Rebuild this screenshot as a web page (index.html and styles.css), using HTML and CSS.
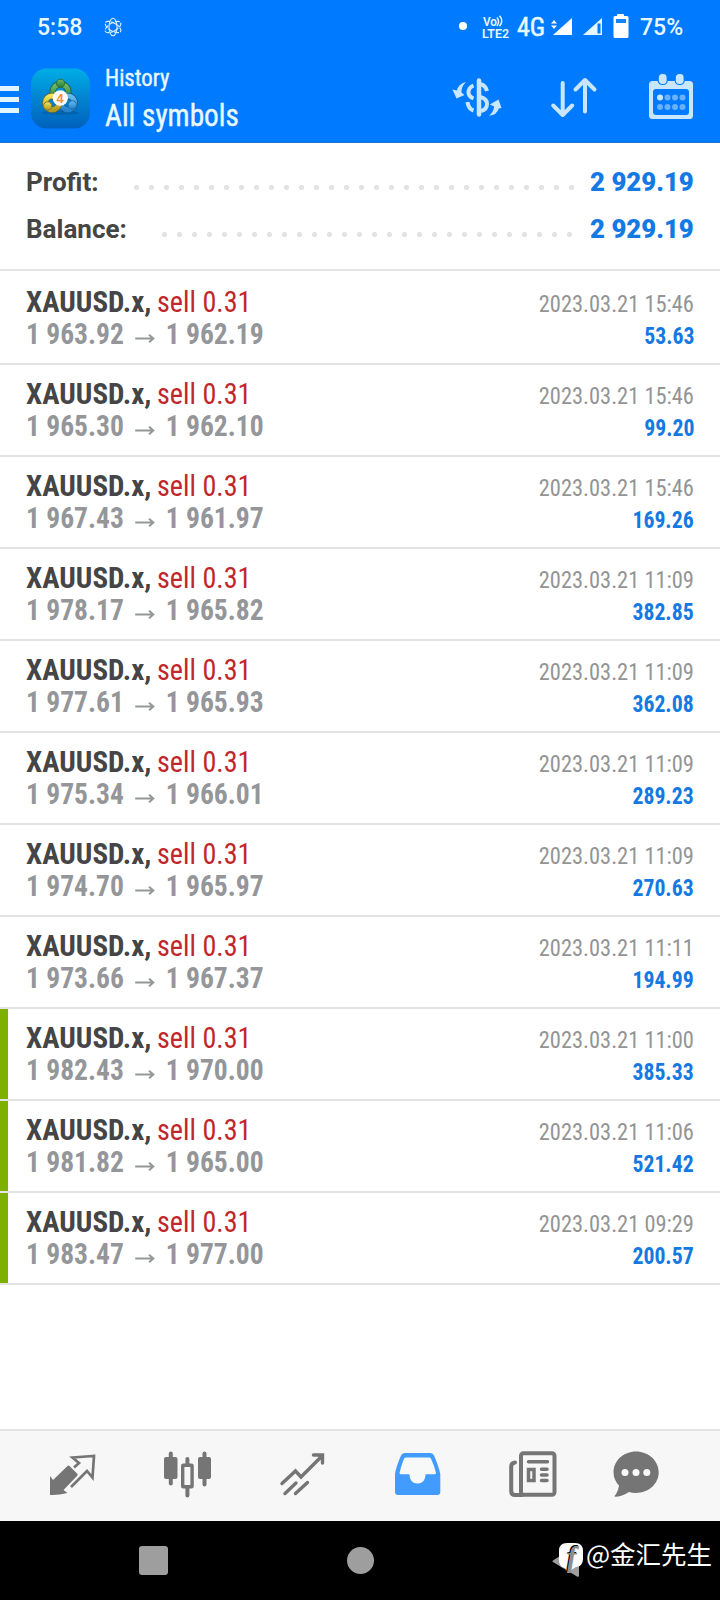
FILE: index.html
```html
<!DOCTYPE html>
<html lang="en">
<head>
<meta charset="utf-8">
<title>History</title>
<link rel="stylesheet" href="styles.css">
</head>
<body>
<div class="screen">
  <header class="header">
    <div class="status">
      <span class="clock">5:58</span>
      <svg class="atom" width="18" height="20" viewBox="0 0 18 20" fill="none" stroke="#d9efff" stroke-width="1.1">
        <ellipse cx="9" cy="10" rx="4" ry="8.8"/>
        <ellipse cx="9" cy="10" rx="4" ry="8.8" transform="rotate(60 9 10)" stroke-dasharray="5 1.2"/>
        <ellipse cx="9" cy="10" rx="4" ry="8.8" transform="rotate(-60 9 10)" stroke-dasharray="5 1.2"/>
      </svg>
      <span class="dot"></span>
      <svg class="volte" width="28" height="24" viewBox="0 0 28 24" fill="#e6f6ff">
        <text x="1" y="10.500" class="volte-text" textLength="14" lengthAdjust="spacingAndGlyphs">Vo</text>
        <path d="M15 2.500q3 4 0 8.500M17.500 .8q4.500 5 0 10.500" fill="none" stroke="#e6f6ff" stroke-width="1.500"/>
        <text x="0" y="22.500" class="volte-text" textLength="27" lengthAdjust="spacingAndGlyphs">LTE2</text>
      </svg>
      <span class="net">4G</span>
      <svg class="sig1" width="22" height="18" viewBox="0 0 22 18" fill="#fff"><path d="M21 0v17H2zM0 5.500L3 2l3 3.500zM0 7.500h6L3 11z"/></svg>
      <svg class="sig2" width="20" height="18" viewBox="0 0 20 18"><path d="M19 0v17H0z" fill="#e6f6ff"/><path d="M14.500 5.500h3v10h-3z" fill="#007bff"/></svg>
      <svg class="batt" width="16" height="24" viewBox="0 0 16 24"><path d="M4 2V1q0-1 1-1h5q1 0 1 1v1h3q1.500 0 1.500 1.500v19q0 1.500-1.500 1.500H2Q.5 24 .5 22.500v-19Q.5 2 2 2z" fill="#fff"/><path d="M3 5h10v4H3z" fill="#1684f5"/></svg>
      <span class="pct">75%</span>
    </div>
    <div class="appbar">
      <div class="menu"><i></i><i></i><i></i></div>
      <svg class="logo" width="60" height="61" viewBox="0 0 60 61">
        <defs>
          <linearGradient id="bg" x2="0" y2="1"><stop stop-color="#00aee6"/><stop offset=".5" stop-color="#0283d0"/><stop offset="1" stop-color="#0061bd"/></linearGradient>
          <linearGradient id="gr" x2="0" y2="1"><stop stop-color="#71bd6b"/><stop offset="1" stop-color="#247b32"/></linearGradient>
          <linearGradient id="ye" x2="0" y2="1"><stop stop-color="#f1e35d"/><stop offset="1" stop-color="#b09a24"/></linearGradient>
          <linearGradient id="bl" x2="0" y2="1"><stop stop-color="#68bdec"/><stop offset="1" stop-color="#2583cf"/></linearGradient>
        </defs>
        <rect width="60" height="61" rx="16" fill="url(#bg)"/>
        <ellipse cx="30" cy="45" rx="19" ry="2" fill="#004d91" opacity=".4"/>
        <circle cx="30" cy="24" r="8" fill="none" stroke="#225e3a" stroke-width="6.500"/>
        <circle cx="30" cy="24" r="8" fill="none" stroke="url(#gr)" stroke-width="5"/>
        <circle cx="37.500" cy="35" r="7" fill="none" stroke="#195a91" stroke-width="6.500"/>
        <circle cx="37.500" cy="35" r="7" fill="none" stroke="url(#bl)" stroke-width="5"/>
        <circle cx="21.500" cy="35" r="7" fill="none" stroke="#6b6925" stroke-width="6.500"/>
        <circle cx="21.500" cy="35" r="7" fill="none" stroke="url(#ye)" stroke-width="5"/>
        <circle cx="30" cy="15" r="4.200" fill="url(#gr)" stroke="#286e38"/>
        <circle cx="17" cy="38" r="4.200" fill="url(#ye)" stroke="#857823"/>
        <circle cx="42" cy="37" r="4.200" fill="url(#bl)" stroke="#1d6cad"/>
        <circle cx="29.800" cy="30" r="7.800" fill="#fbfaf6"/>
        <text x="29.600" y="34.800" text-anchor="middle" class="logo-num">4</text>
      </svg>
      <div class="titles"><span class="sub">History</span><span class="main">All symbols</span></div>
      <svg class="ic-money" width="50" height="40" viewBox="0 0 50 40" fill="none" stroke="#c9e6ff" stroke-width="4">
        <path d="M27 2.500v34" stroke-linecap="round" stroke-width="4.500"/>
        <path d="M21.500 7.500q-5 2-5 7 0 4 5 6M21.500 32.500q-5-1.500-6-8.500"/>
        <path d="M28 6q5.500 1 7 7M28 19q7 1.500 7 7 0 5.500-6 7"/>
        <path d="M.5 11.500L4.500 20.500 12.500 17 9.500 14.500Q9 9 14 4 6 6 5 12.500zM49.500 30L46.500 21.500 37.800 26.500 42.200 28.500Q41.500 34 37 37.800 45 37 46.800 30.500z" fill="#c9e6ff" stroke="none"/>
      </svg>
      <svg class="ic-sort" width="46" height="41" viewBox="0 0 46 41" fill="none" stroke="#c9e6ff" stroke-width="4" stroke-linecap="round" stroke-linejoin="round"><path d="M11.700 6v31M2.200 28.500l9.500 9.500 9.500-9.500M34 34.500V4M24.500 12.500L34 3l9.500 9.500"/></svg>
      <svg class="ic-cal" width="44" height="46" viewBox="0 0 44 46">
        <rect x="0" y="7" width="44" height="38" rx="3.500" fill="#c9e6ff"/>
        <rect x="4" y="15" width="36" height="26" rx="3" fill="#007bff"/>
        <rect x="9.200" y="-.5" width="9" height="11" rx="4" fill="#c9e6ff" stroke="#007bff" stroke-width="1.200"/>
        <rect x="26.200" y="-.5" width="9" height="11" rx="4" fill="#c9e6ff" stroke="#007bff" stroke-width="1.200"/>
        <g fill="#67b1ff"><circle cx="11" cy="23.500" r="3" fill="#c9e6ff"/><circle cx="18.500" cy="23.500" r="3"/><circle cx="26" cy="23.500" r="3"/><circle cx="33.500" cy="23.500" r="3"/><circle cx="11" cy="33" r="3"/><circle cx="18.500" cy="33" r="3"/><circle cx="26" cy="33" r="3"/><circle cx="33.500" cy="33" r="3"/></g>
      </svg>
    </div>
  </header>

  <section class="summary">
    <div class="line"><span>Profit:</span><i class="dots dots-profit"></i><b>2 929.19</b></div>
    <div class="line"><span>Balance:</span><i class="dots dots-balance"></i><b>2 929.19</b></div>
  </section>

  <main class="deals" id="deals"></main>

  <nav class="tabs">
    <svg class="t1" width="48" height="48" viewBox="0 0 48 48"><path d="M1 26l3 4L18.500 16q1-1 2 0l8 8q.5 1-.5 2L14.500 40l4 3Q9 45.500 1 45z" fill="#757575"/><path d="M25 17.500l5-4.500-6.500-5.500L45 6l-1.500 21.500L38 21 22 37" fill="none" stroke="#757575" stroke-width="2.700"/></svg>
    <svg class="t2" width="48" height="48" viewBox="0 0 48 48" fill="#757575"><rect x="1" y="7" width="13.500" height="22" rx="2"/><rect x="5.800" y="1.500" width="4" height="34" rx="2"/><rect x="35" y="7" width="13" height="22" rx="2"/><rect x="39.500" y="1.500" width="4" height="35" rx="2"/><rect x="22.400" y="7" width="4" height="40.500" rx="2"/><rect x="19.700" y="15.200" width="9.400" height="21.600" fill="#f7f7f7" stroke="#757575" stroke-width="3.400" rx=".5"/></svg>
    <svg class="t3" width="48" height="48" viewBox="0 0 48 48" fill="none" stroke="#757575" stroke-width="3.400" stroke-linecap="round"><path d="M3 33.500L16.500 21l5.500 6L43.500 5.500M34.500 5h9v8M6 43.500l11-10.500M16.500 43.500L28.500 32.500" /></svg>
    <svg class="t4" width="48" height="48" viewBox="0 0 48 48"><path d="M10.500 3h26q2.500 0 3.500 2.500Q45 17 46.300 24v18q0 3-3 3H4q-3 0-3-3V24Q2 17 7 5.500 8 3 10.500 3z" fill="#429bff"/><path d="M12 7.500h23q1.500 0 2 1.200Q40.500 16 42 23q0 1.200-1.500 1.200h-8.900q-.3 9.300-8.100 9.300t-8.100-9.300H7q-1.500 0-1.500-1.200Q7 16 10 8.700q.5-1.200 2-1.200z" fill="#f7f8f8"/></svg>
    <svg class="t5" width="48" height="48" viewBox="0 0 48 48" fill="none" stroke="#757575" stroke-width="4"><rect x="12" y="3.300" width="33.500" height="41.500" rx="2.500"/><path d="M6 12.500q-3.800.5-3.800 4V41q0 4 4 4H13" stroke-linecap="round"/><path d="M19.500 11.700h19M32.500 19.200H38M32.500 25H38M32.500 30.500H38" stroke-width="3.500" stroke-linecap="round"/><rect x="19.500" y="19.500" width="5.500" height="11" stroke-width="3.500"/></svg>
    <svg class="t6" width="48" height="48" viewBox="0 0 48 48"><path d="M24 1.500c12.600 0 22.700 9.300 22.700 20.800S36.600 43 24 43q-4 0-7-1Q10 46.500 3 46.800q-1-.3-.3-1Q6 42 7 35.500 1.500 30 1.500 22.300C1.500 10.800 11.400 1.500 24 1.500z" fill="#757575"/><g fill="#f7f8f8"><circle cx="13" cy="22.500" r="3.500"/><circle cx="24" cy="22.500" r="3.500"/><circle cx="34.800" cy="22.500" r="3.500"/></g></svg>
  </nav>

  <footer class="sysnav">
    <i class="sq"></i><i class="circ"></i>
    <svg class="back" width="35" height="40" viewBox="0 0 35 40"><path d="M3 19.500L27 4q2-1 2 1v29.500q0 2-2 1L3 21q-1.500-.7 0-1.500z" fill="#9e9e9e"/><path d="M17 2h8q8 0 8 8v8q0 7-7 8-4 2-8 6l-3-5q-6-1-6-8v-9q0-8 8-8z" fill="#fff"/><text x="17" y="25.500" class="f-mark">f</text></svg>
    <span class="handle">@金汇先生</span>
  </footer>
</div>
<script src="deals.js"></script>
</body>
</html>
```
FILE: styles.css
```css
* { box-sizing: border-box; }
body { margin: 0; background: #fff; font-family: Roboto, "Liberation Sans", sans-serif; }
svg { display: block; flex: none; overflow: visible; }
.screen { width: 720px; height: 1600px; display: flex; flex-direction: column; overflow: hidden; }

.header { height: 143px; flex: none; background: #007bff; border-bottom: 1px solid #1f74cc; color: #e9f8ff; }
.status { height: 54px; display: flex; align-items: flex-start; font-weight: 500; font-size: 23px; line-height: 23px; white-space: nowrap; }
.clock { margin: 16px 0 0 37px; width: 46px; }
.atom { margin: 17px 0 0 21px; }
.dot { margin: 22px 0 0 337px; width: 8px; height: 8px; border-radius: 50%; background: #fff; }
.volte { margin: 15px 0 0 15px; }
.volte-text { font: 600 12.500px Roboto, sans-serif; }
.net { margin: 16px 0 0 7px; width: 27px; font: 400 26px/23px "Roboto Condensed", Roboto, sans-serif; -webkit-text-stroke: .5px #e9f8ff; }
.sig1 { margin: 18px 0 0 7px; }
.sig2 { margin: 18px 0 0 10px; }
.batt { margin: 14px 0 0 10px; }
.pct { margin: 16px 0 0 11px; }

.appbar { height: 88px; display: flex; align-items: flex-start; font-family: "Roboto Condensed", Roboto, sans-serif; }
.menu { width: 19px; margin: 32px 12px 0 0; display: grid; gap: 6px; }
.menu i { height: 5px; background: #e2f5ff; }
.logo { margin-top: 14px; width: 59px; }
.logo-num { font: 700 13px "Liberation Sans", sans-serif; fill: #f28c3b; }
.titles { width: 337px; margin: 0 9px 0 15px; display: flex; flex-direction: column; align-items: flex-start; -webkit-text-stroke: .4px #e9f8ff; }
.sub { font-size: 24px; line-height: 28px; margin-top: 10px; transform: scaleX(.95); transform-origin: left; }
.main { font-size: 32px; line-height: 38px; margin-top: 4px; transform: scaleX(.915); transform-origin: left; }
.ic-money { margin: 24px 0 0 1px; }
.ic-sort { margin: 23px 0 0 49px; }
.ic-cal { margin: 20px 0 0 52px; }

.summary { height: 128px; flex: none; padding: 16px 26px; border-bottom: 2px solid #e3e3e3; font-size: 26px; font-weight: 700; color: #454545; }
.line { display: flex; height: 47px; line-height: 47px; justify-content: space-between; white-space: nowrap; }
.line b { color: #1479e2; transform: scaleX(.99); transform-origin: right; }
.dots { height: 5px; margin-top: 26px; margin-left: auto; background: radial-gradient(circle at 2.500px 2.500px, #e3e3e3 2.200px, transparent 2.900px) 0 0 / 15px 5px repeat-x; }
.dots-profit { width: 440px; margin-right: 15px; }
.dots-balance { width: 410px; margin-right: 17px; }

.deals { flex: 1; min-height: 0; padding-top: 2px; font-family: "Roboto Condensed", Roboto, sans-serif; }
.deal { height: 92px; padding: 13px 26px 0; border-bottom: 2px solid #e3e3e3; display: grid; grid-template: 32px 32px / 1fr auto; align-items: baseline; line-height: 32px; white-space: pre; position: relative; }
.deal.marked::before { content: ""; position: absolute; left: 0; top: 0; bottom: 0; width: 7.500px; background: #7eb000; }
.symbol { font-size: 29px; color: #c0272a; }
.symbol b { font-weight: 700; color: #454545; }
.side { display: inline-block; margin-left: -1px; transform: scaleX(.97); transform-origin: left; }
.price { font-size: 29px; font-weight: 700; color: #949699; display: flex; align-items: baseline; transform: scaleX(.95); transform-origin: left; }
.price svg { margin: 0 12px 0 12px; }
.time { font-size: 24px; color: #949494; transform: scaleX(.935); transform-origin: right; justify-self: end; }
.gain { font-size: 24px; font-weight: 700; color: #1479e2; transform: scaleX(.905); transform-origin: right; justify-self: end; }

.tabs { height: 92px; flex: none; border-top: 2px solid #e3e3e3; background: #f7f7f7; display: flex; padding: 19px 0 0 49px; }
.t2 { margin-left: 66px; }
.t3 { margin-left: 68px; }
.t4, .t5 { margin-left: 67px; }
.t6 { margin-left: 55px; }

.sysnav { height: 79px; flex: none; background: #000; display: flex; align-items: flex-start; }
.sq { width: 29px; height: 29px; margin: 25px 0 0 139px; border-radius: 3px; background: #9e9e9e; }
.circ { width: 27px; height: 27px; margin: 26px 0 0 179px; border-radius: 50%; background: #9e9e9e; }
.back { margin: 20px 0 0 176px; }
.f-mark { font: italic 700 29px "Liberation Serif", serif; fill: #8e8e8e; text-shadow: -1px -1px 0 #000; }
.handle { margin: 14px 0 0 1px; font: 400 25.500px/36px "Noto Sans CJK SC", sans-serif; color: #fff; white-space: nowrap; }
```
FILE: deals.js
```js
const deals = [
  ['1 963.92', '1 962.19', '2023.03.21 15:46', '53.63'],
  ['1 965.30', '1 962.10', '2023.03.21 15:46', '99.20'],
  ['1 967.43', '1 961.97', '2023.03.21 15:46', '169.26'],
  ['1 978.17', '1 965.82', '2023.03.21 11:09', '382.85'],
  ['1 977.61', '1 965.93', '2023.03.21 11:09', '362.08'],
  ['1 975.34', '1 966.01', '2023.03.21 11:09', '289.23'],
  ['1 974.70', '1 965.97', '2023.03.21 11:09', '270.63'],
  ['1 973.66', '1 967.37', '2023.03.21 11:11', '194.99'],
  ['1 982.43', '1 970.00', '2023.03.21 11:00', '385.33', true],
  ['1 981.82', '1 965.00', '2023.03.21 11:06', '521.42', true],
  ['1 983.47', '1 977.00', '2023.03.21 09:29', '200.57', true],
];
const arrow = '<svg width="20" height="10" viewBox="0 0 20 10" fill="none" stroke="#949699" stroke-width="2.1"><path d="M0 4.500h19M14.500 .8l4.500 3.700-4.500 3.700"/></svg>';
document.getElementById('deals').innerHTML = deals.map(([open, close, time, gain, marked]) =>
  `<article class="deal${marked ? ' marked' : ''}"><span class="symbol"><b>XAUUSD.x,</b> <span class="side">sell 0.31</span></span><span class="time">${time}</span><span class="price"><span>${open}</span>${arrow}<span>${close}</span></span><span class="gain">${gain}</span></article>`
).join('');
```
